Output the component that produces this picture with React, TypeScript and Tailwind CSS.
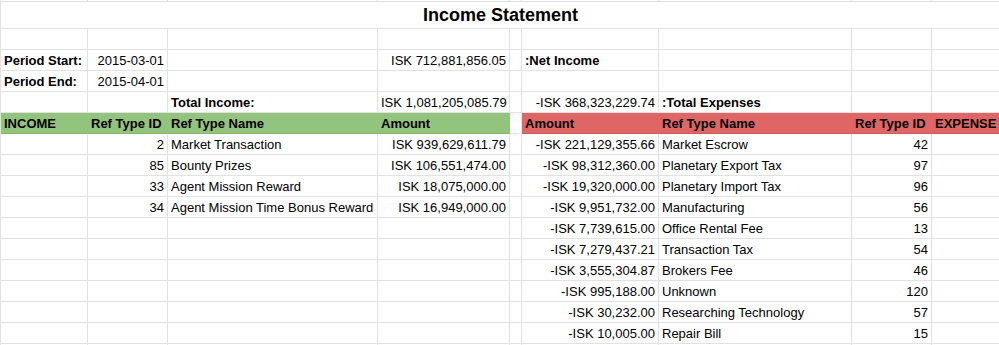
import React from 'react'

type CellDef = {
    text?: string
    right?: boolean
    bold?: boolean
    fill?: 'green' | 'red'
}

const grid = 'grid grid-cols-[87px_80px_210px_132px_12px_137px_193px_80px_100px]'

const income = [
    ['2', 'Market Transaction', 'ISK 939,629,611.79'],
    ['85', 'Bounty Prizes', 'ISK 106,551,474.00'],
    ['33', 'Agent Mission Reward', 'ISK 18,075,000.00'],
    ['34', 'Agent Mission Time Bonus Reward', 'ISK 16,949,000.00'],
]

const expenses = [
    ['-ISK 221,129,355.66', 'Market Escrow', '42'],
    ['-ISK 98,312,360.00', 'Planetary Export Tax', '97'],
    ['-ISK 19,320,000.00', 'Planetary Import Tax', '96'],
    ['-ISK 9,951,732.00', 'Manufacturing', '56'],
    ['-ISK 7,739,615.00', 'Office Rental Fee', '13'],
    ['-ISK 7,279,437.21', 'Transaction Tax', '54'],
    ['-ISK 3,555,304.87', 'Brokers Fee', '46'],
    ['-ISK 995,188.00', 'Unknown', '120'],
    ['-ISK 30,232.00', 'Researching Technology', '57'],
    ['-ISK 10,005.00', 'Repair Bill', '15'],
]

const Cell = ({ c }: { c: CellDef }) => {
    let cls = 'h-[21px] px-[3px] pt-[2px] leading-[18px] whitespace-nowrap overflow-visible border-r border-b border-[#e2e2e2]'
    if (c.fill === 'green') cls += ' bg-[#93c47d] border-r-[#93c47d] border-b-[#86b56f]'
    if (c.fill === 'red') cls += ' bg-[#e06666] border-r-[#e06666] border-b-[#cf5d5d]'
    if (c.right) cls += ' text-right'
    if (c.bold) cls += ' font-bold'
    return <div className={cls}>{c.text}</div>
}

const Row = ({ cells }: { cells: CellDef[] }) => {
    const full = [...cells]
    while (full.length < 9) full.push({})
    return (
        <div className={grid}>
            {full.map((c, i) => <Cell key={i} c={c} />)}
        </div>
    )
}

export default function App() {
    const rows: CellDef[][] = [
        [],
        [{ text: 'Period Start:', bold: true }, { text: '2015-03-01', right: true }, {}, { text: 'ISK 712,881,856.05', right: true }, {}, { text: ':Net Income', bold: true }],
        [{ text: 'Period End:', bold: true }, { text: '2015-04-01', right: true }],
        [{}, {}, { text: 'Total Income:', bold: true }, { text: 'ISK 1,081,205,085.79', right: true }, {}, { text: '-ISK 368,323,229.74', right: true }, { text: ':Total Expenses', bold: true }],
        [
            { text: 'INCOME', bold: true, fill: 'green' },
            { text: 'Ref Type ID', bold: true, fill: 'green' },
            { text: 'Ref Type Name', bold: true, fill: 'green' },
            { text: 'Amount', bold: true, fill: 'green' },
            {},
            { text: 'Amount', bold: true, fill: 'red' },
            { text: 'Ref Type Name', bold: true, fill: 'red' },
            { text: 'Ref Type ID', bold: true, fill: 'red' },
            { text: 'EXPENSE', bold: true, fill: 'red' },
        ],
    ]

    expenses.forEach((e, i) => {
        const inc = income[i]
        rows.push([
            {},
            { text: inc?.[0], right: true },
            { text: inc?.[1] },
            { text: inc?.[2], right: true },
            {},
            { text: e[0], right: true },
            { text: e[1] },
            { text: e[2], right: true },
        ])
    })

    return (
        <div className="w-[999px] h-[345px] overflow-hidden bg-white text-black text-[13px] font-['Liberation_Sans',Arial,sans-serif]">
            <div className="w-[1032px] border-l border-[#e2e2e2]">
                {/* sliver of the row above */}
                <div className={grid}>
                    {Array.from({ length: 9 }).map((_, i) => (
                        <div key={i} className="h-[2px] border-r border-b border-[#e2e2e2]" />
                    ))}
                </div>
                <div className="h-[27px] w-[999px] border-b border-[#e2e2e2] flex items-center justify-center text-[18px] font-bold leading-none">
                    Income Statement
                </div>
                {rows.map((r, i) => <Row key={i} cells={r} />)}
                <Row cells={[]} />
            </div>
        </div>
    )
}
